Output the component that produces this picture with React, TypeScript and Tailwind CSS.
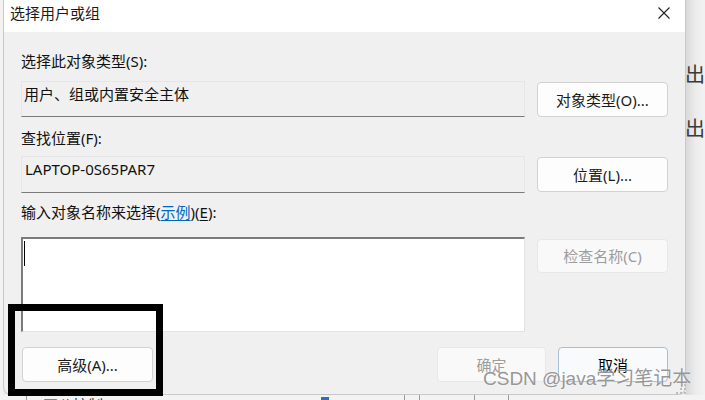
import React from "react";

const FONT = { fontFamily: '"Noto Sans", "Noto Sans CJK SC", sans-serif' };

function Btn({
  children,
  className = "",
  variant = "normal",
}: {
  children: React.ReactNode;
  className?: string;
  variant?: "normal" | "disabled" | "default";
}) {
  const look =
    variant === "disabled"
      ? "bg-[#f9f9f9] border-[#e7e7e7] text-[#9d9d9d]"
      : variant === "default"
      ? "bg-[#f8fafc] border-[#a7bfd3] text-black"
      : "bg-[#fdfdfd] border-[#d2d2d2] text-[#1b1b1b]";
  return (
    <div
      className={`flex items-center justify-center rounded-[4px] border text-[15px] leading-[20px] ${look} ${className}`}
    >
      {children}
    </div>
  );
}

export default function App() {
  return (
    <div className="relative w-[705px] h-[400px] overflow-hidden bg-[#ececec]" style={FONT}>
      <div className="flex h-[395px]">
        {/* strip left of the dialog */}
        <div className="w-[3px] bg-[#f2f2f2]" />

        {/* dialog */}
        <div className="w-[683px] flex flex-col border-l border-r border-b border-[#c8c8c8] rounded-b-[8px] overflow-hidden bg-[#f0f0f0]">
          {/* title bar */}
          <div className="h-[32px] shrink-0 bg-white flex items-start justify-between pl-[6px] pr-[15px] pt-[3px]">
            <span className="text-[15px] leading-[20px] text-[#1a1a1a]">选择用户或组</span>
            <svg width="12" height="12" viewBox="0 0 12 12" className="mt-[4px]">
              <path d="M0.5 0.5 L11.5 11.5 M11.5 0.5 L0.5 11.5" stroke="#222" strokeWidth="1.1" fill="none" />
            </svg>
          </div>

          {/* body */}
          <div className="flex-1 flex flex-col pl-[17px] pr-[17px] text-[#111]">
            <div className="mt-[19px] text-[15px] leading-[20px]">选择此对象类型(S):</div>
            <div className="mt-[10px] flex gap-[12px] items-start">
              <div className="w-[504px] h-[36px] border border-[#e6e6e6] border-b-[#7a7a7a] bg-[#f0f0f0] pl-[2px] pt-[2px] text-[15px] leading-[20px]">
                用户、组或内置安全主体
              </div>
              <Btn className="w-[131px] h-[35px] mt-[1px]">对象类型(O)...</Btn>
            </div>

            <div className="mt-[11px] text-[15px] leading-[20px]">查找位置(F):</div>
            <div className="mt-[8px] flex gap-[12px] items-start">
              <div className="w-[504px] h-[37px] border border-[#e6e6e6] border-b-[#7a7a7a] bg-[#f0f0f0] pl-[3px] pt-[2px] text-[15px] leading-[20px]">
                LAPTOP-0S65PAR7
              </div>
              <Btn className="w-[131px] h-[35px] mt-[1px]">位置(L)...</Btn>
            </div>

            <div className="mt-[9px] text-[15px] leading-[20px]">
              输入对象名称来选择(
              <span className="text-[#0067c0] underline underline-offset-2">示例</span>
              )(<span className="underline underline-offset-2">E</span>):
            </div>
            <div className="mt-[15px] flex gap-[12px] items-start">
              <div className="w-[504px] h-[95px] bg-white border-t-2 border-l-2 border-r border-b border-t-[#7b7b7b] border-l-[#7b7b7b] border-r-[#e3e3e3] border-b-[#e3e3e3] pl-[1px] pt-[2px]">
                <div className="w-[1px] h-[25px] bg-black" />
              </div>
              <Btn variant="disabled" className="w-[131px] h-[34px] mt-[2px]">
                检查名称(C)
              </Btn>
            </div>

            <div className="mt-[15px] flex items-start justify-between">
              <Btn className="w-[131px] h-[35px] ml-[1px]">高级(A)...</Btn>
              <div className="flex gap-[12px]">
                <Btn variant="disabled" className="w-[109px] h-[35px]">
                  确定
                </Btn>
                <Btn variant="default" className="w-[110px] h-[35px]">
                  取消
                </Btn>
              </div>
            </div>
          </div>
        </div>

        {/* window behind, to the right */}
        <div className="flex-1 overflow-hidden bg-gradient-to-r from-[#d9d9d9] via-[#ececec] to-[#f2f2f2]">
          <div className="mt-[62px] -ml-[1px] text-[20px] leading-[24px] text-[#3a3a3a] whitespace-nowrap" style={{ fontFamily: '"Noto Sans CJK SC", sans-serif' }}>
            出口
          </div>
          <div className="mt-[30px] -ml-[1px] text-[20px] leading-[24px] text-[#3a3a3a] whitespace-nowrap" style={{ fontFamily: '"Noto Sans CJK SC", sans-serif' }}>
            出口
          </div>
        </div>
      </div>

      {/* strip of the window below */}
      <div className="h-[5px] flex items-start overflow-hidden bg-[#f3f3f3]">
        <div className="ml-[26px] w-[1px] h-[5px] bg-[#9a9a9a]" />
        <div className="ml-[16px] mt-[1px] text-[15px] leading-[18px] text-[#333] whitespace-nowrap">□公控制</div>
        <div className="ml-[218px] mt-[2px] w-[8px] h-[3px] bg-[#2d6fb8]" />
        <div className="ml-[75px] w-[1px] h-[5px] bg-[#9a9a9a]" />
        <div className="ml-[14px] w-[1px] h-[5px] bg-[#9a9a9a]" />
        <div className="ml-[54px] w-[1px] h-[5px] bg-[#9a9a9a]" />
        <div className="ml-[33px] w-[1px] h-[5px] bg-[#9a9a9a]" />
      </div>

      {/* resize grip */}
      <svg width="14" height="12" viewBox="0 0 14 12" className="absolute left-[674px] top-[383px]">
        <rect x="10" y="1" width="2" height="2" fill="#bdbdbd" />
        <rect x="6" y="5" width="2" height="2" fill="#bdbdbd" />
        <rect x="10" y="5" width="2" height="2" fill="#bdbdbd" />
        <rect x="2" y="9" width="2" height="2" fill="#bdbdbd" />
        <rect x="6" y="9" width="2" height="2" fill="#bdbdbd" />
        <rect x="10" y="9" width="2" height="2" fill="#bdbdbd" />
      </svg>

      {/* watermark */}
      <div
        className="absolute left-[483px] top-[367px] text-[19px] leading-[24px] text-[#8a8a8a]/90 whitespace-nowrap"
        style={{ fontFamily: '"Liberation Sans", "Noto Sans CJK SC", sans-serif', textShadow: "0 0 2px rgba(255,255,255,0.8)" }}
      >
        CSDN @java学习笔记本
      </div>

      {/* black annotation box */}
      <div className="absolute left-[8px] top-[304px] w-[155px] h-[92px] border-[7px] border-black" />
    </div>
  );
}
